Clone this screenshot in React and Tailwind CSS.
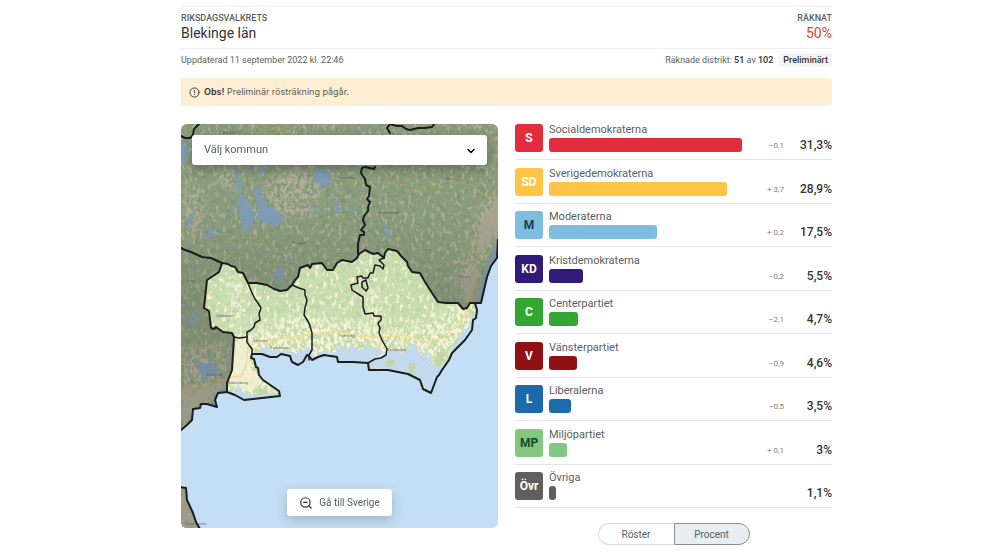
import { useState } from "react";
import { ChevronDown, CircleAlert, ZoomOut } from "lucide-react";

const parties = [
  { short: "S", name: "Socialdemokraterna", share: 31.3, label: "31,3%", change: "−0,1", color: "bg-[#e32c3e]", text: "text-white" },
  { short: "SD", name: "Sverigedemokraterna", share: 28.9, label: "28,9%", change: "+ 3,7", color: "bg-[#fdc446]", text: "text-white" },
  { short: "M", name: "Moderaterna", share: 17.5, label: "17,5%", change: "+ 0,2", color: "bg-[#7dbde0]", text: "text-[#1c3c54]" },
  { short: "KD", name: "Kristdemokraterna", share: 5.5, label: "5,5%", change: "−0,2", color: "bg-[#321a78]", text: "text-white" },
  { short: "C", name: "Centerpartiet", share: 4.7, label: "4,7%", change: "−2,1", color: "bg-[#32a532]", text: "text-white" },
  { short: "V", name: "Vänsterpartiet", share: 4.6, label: "4,6%", change: "−0,9", color: "bg-[#8f1113]", text: "text-white" },
  { short: "L", name: "Liberalerna", share: 3.5, label: "3,5%", change: "−0,5", color: "bg-[#1c69ac]", text: "text-white" },
  { short: "MP", name: "Miljöpartiet", share: 3, label: "3%", change: "+ 0,1", color: "bg-[#82c882]", text: "text-[#1d4a26]" },
  { short: "Övr", name: "Övriga", share: 1.1, label: "1,1%", change: "", color: "bg-[#5f5f5f]", text: "text-white" },
];

const maxShare = 31.3;

const municipalities = ["Karlshamn", "Karlskrona", "Olofström", "Ronneby", "Sölvesborg"];

const places = [
  { name: "Älmhult", x: 42, y: 10 },
  { name: "Tingsryd", x: 111, y: 120 },
  { name: "Lessebo", x: 158, y: 55 },
  { name: "Nybro", x: 262, y: 56 },
  { name: "Emmaboda", x: 198, y: 90 },
  { name: "Torsås", x: 278, y: 154 },
  { name: "Osby", x: 5, y: 158 },
  { name: "Olofström", x: 35, y: 193 },
  { name: "Mörrum", x: 73, y: 218 },
  { name: "Karlshamn", x: 89, y: 225 },
  { name: "Ronneby", x: 158, y: 213 },
  { name: "Karlskrona", x: 206, y: 227 },
  { name: "Bromölla", x: 26, y: 252 },
  { name: "Sölvesborg", x: 47, y: 260 },
  { name: "Simrishamn", x: 4, y: 401 },
];

// Outlines for the map, in a 317 x 404 box
const northBorder =
  "41 139 47 140 50 142 54 143 57 148 62 149 67 159 76 159 86 161 93 165 99 167 106 166 111 161 114 156 117 153 119 144 127 141 129 144 131 140 141 139 146 146 152 146 156 139 161 136 171 138 176 134 178 130 184 126 192 130 197 129 203 134 204 129 207 125 216 127 221 133 226 138 227 142 231 148 239 149 244 158 251 169 257 178 265 179 277 179 282 185 286 184 289 179 294 179";
const southCoast =
  "296 186 295 194 292 196 291 206 284 216 271 229 268 236 261 246 258 251 256 253 250 269 242 265 239 256 227 250 207 246 188 246 187 239 172 238 157 238 156 233 143 231 137 233 131 236 128 232 126 231 122 238 117 241 111 238 109 232 100 230 96 233 89 233 81 230 71 230 70 234 73 235 75 243 77 244 78 251 82 256 98 267 99 272 63 276 54 271 46 268";
const westBorder =
  "46 259 51 246 53 213 51 209 42 208 35 203 33 205 30 204 28 187 23 184 26 156 38 148";
const county = "M" + northBorder + " " + southCoast + " " + westBorder + "Z";
const mainland =
  "M0 0H317V123L316 134 312 140 306 153 303 166 300 179 294 179 L" +
  southCoast +
  " 37 269 34 276 36 283 20 280 19 284 12 285 11 296 6 301 0 306Z";
const southWest = "M-2 363 5 364 6 376 12 389 15 398 19 405-2 405Z";

// Breaks a shape up into specks with a feathered edge
function Specks({ id, frequency, seed, cut, blur }) {
  return (
    <filter id={id} colorInterpolationFilters="sRGB">
      <feTurbulence type="fractalNoise" baseFrequency={frequency} numOctaves="3" seed={seed} />
      <feColorMatrix values={"0 0 0 0 0  0 0 0 0 0  0 0 0 0 0  8 0 0 0 " + cut} result="spots" />
      <feGaussianBlur in="SourceGraphic" stdDeviation={blur} />
      <feComposite in2="spots" operator="in" />
    </filter>
  );
}

function DistrictMap() {
  return (
    <svg viewBox="0 0 317 404" className="block h-auto w-full" role="img" aria-label="Karta över Blekinge län">
      <defs>
        <clipPath id="land">
          <path d={mainland} />
          <path d={southWest} />
        </clipPath>
        <clipPath id="county">
          <path d={county} />
        </clipPath>
        <Specks id="sparse" frequency="0.26 0.17" seed="4" cut="-4.6" blur="0" />
        <Specks id="dense" frequency="0.3 0.2" seed="15" cut="-3.7" blur="4" />
        <Specks id="ponds" frequency="0.15 0.1" seed="23" cut="-5.4" blur="0" />
        <Specks id="woods" frequency="0.2" seed="31" cut="-4.2" blur="0" />
        <filter id="rough">
          <feTurbulence type="fractalNoise" baseFrequency="0.25" numOctaves="2" seed="3" />
          <feDisplacementMap in="SourceGraphic" scale="10" xChannelSelector="R" yChannelSelector="G" />
        </filter>
        <linearGradient id="shade" x1="0" y1="0" x2="0" y2="1">
          <stop offset="0" stopColor="#5c6250" stopOpacity="0" />
          <stop offset="0.3" stopColor="#5c6250" stopOpacity="0.25" />
          <stop offset="1" stopColor="#5c6250" stopOpacity="0.1" />
        </linearGradient>
      </defs>

      <rect width="317" height="404" fill="#c4dff5" />

      {/* Neighbouring counties */}
      <g clipPath="url(#land)">
        <rect width="317" height="404" fill="#8a9d7c" />
        <rect width="317" height="404" fill="#7d9170" filter="url(#woods)" opacity="0.6" />
        <rect width="317" height="404" fill="#b3b297" filter="url(#sparse)" opacity="0.8" />
        <rect width="190" height="320" fill="#8098a8" filter="url(#ponds)" opacity="0.8" />
        <g fill="#b3ad9a" filter="url(#dense)">
          <ellipse cx="112" cy="70" rx="28" ry="24" />
          <ellipse cx="47" cy="54" rx="13" ry="11" />
          <ellipse cx="12" cy="85" rx="10" ry="28" />
          <path d="M317 66 296 84 290 120 274 160 286 180 306 130 317 120Z" />
          <path d="M0 225 48 218 42 269 0 310Z" />
        </g>
        <g fill="#aaa794" opacity="0.8">
          <path d="M317 76 303 90 299 104 296 120 300 128 308 120 317 108Z" filter="url(#rough)" />
          <path d="M278 153 292 140 297 150 290 180 284 176Z" filter="url(#rough)" />
          <path d="M0 262 22 262 44 256 40 266 20 278 0 300Z" filter="url(#rough)" />
          <rect y="363" width="20" height="41" />
        </g>
        <g fill="#7f9bb5" filter="url(#rough)">
          <path d="M54 46 59 50 61 70 70 84 74 97 68 108 60 104 58 78Z" />
          <path d="M73 60 80 69 86 81 96 84 102 96 96 102 84 99 77 92Z" />
          <path d="M134 44 148 48 149 57 142 63 134 56Z" />
          <path d="M78 41 84 41 82 52 77 50Z" />
          <path d="M92 146 103 145 104 154 98 157 91 153Z" />
          <path d="M23 112 35 103 33 114 27 118Z" />
          <path d="M0 20 8 22 5 38 0 42Z" />
          <path d="M7 95 13 86 12 96 7 105Z" />
          <path d="M201 100 204 99 210 112 206 116Z" />
          <path d="M155 76 159 80 158 90 154 90Z" />
          <path d="M5 198 19 184 18 192 8 204Z" />
          <path d="M12 235 22 242 30 232 33 241 40 249 31 252 21 258 20 248Z" />
          <path d="M34 270 50 259 48 273 38 285 30 282Z" />
        </g>
        <path d="M317 118 309 134 302 150 298 164 296 181 302 181 308 156 317 136Z" fill="#8398ad" />
        <g fill="none" stroke="#b6a45f" strokeWidth="1.2" opacity="0.7">
          <path d="M154 55 198 58 242 63 268 57 290 61 305 72 317 76" />
          <path d="M317 86 301 98 297 120 293 158 289 180" />
          <path d="M0 261 20 260 52 253" />
          <path d="M70 0 84 7 97 3 118 12" />
        </g>
        <rect y="90" width="317" height="314" fill="url(#shade)" />
      </g>

      {/* Blekinge */}
      <g clipPath="url(#county)">
        <rect width="317" height="404" fill="#c8ddb0" />
        <rect y="120" width="317" height="160" fill="#bdd3a2" filter="url(#woods)" opacity="0.6" />
        <rect y="120" width="317" height="160" fill="#f2f1d2" filter="url(#sparse)" />
        <g fill="#f6f3d6" filter="url(#dense)">
          <path d="M60 208 120 190 170 196 205 206 250 197 290 172 300 204 254 240 205 234 120 236 66 234Z" />
          <path d="M50 210 67 210 74 243 100 267 65 273 46 264Z" />
          <path d="M184 165 194 165 205 205 190 208Z" />
          <path d="M50 152 60 156 62 196 50 205Z" />
        </g>
        <path d="M54 218 66 215 71 243 84 261 65 268 50 260Z" fill="#f3f1d2" opacity="0.8" filter="url(#rough)" />
        <g fill="#c3daee" filter="url(#rough)">
          <path d="M76 228 84 224 118 229 126 222 135 231 118 244 98 236 80 234Z" />
          <path d="M138 228 150 229 156 224 166 226 170 218 178 226 184 222 201 227 190 243 152 243 140 234Z" />
          <path d="M192 238 206 229 214 224 222 228 233 219 242 232 246 228 255 242 263 240 257 253 252 272 242 260 226 251 200 249Z" />
          <path d="M270 226 280 212 290 196 296 188 300 205 276 232 264 249Z" />
          <path d="M52 268 58 262 66 270 86 269 98 272 78 277 62 278Z" />
        </g>
        <g fill="#c2d7a2" filter="url(#rough)">
          <ellipse cx="209" cy="239" rx="4" ry="3" />
          <ellipse cx="231" cy="244" rx="4" ry="5" />
          <path d="M256 230 264 224 264 237 258 244 252 239Z" />
          <path d="M72 266 80 262 86 268 78 271Z" />
        </g>
        <g fill="none" stroke="#f2dc93" strokeWidth="1.4">
          <path d="M47 253 60 252 65 242 67 223 76 218 112 213 154 207 174 212 205 213 222 211 246 218 262 214 280 196 290 181" />
          <path d="M222 211 218 220 213 226" />
        </g>
      </g>

      <g fill="#5d5a6c" fontFamily="Liberation Sans, sans-serif" fontSize="4" opacity="0.9">
        {places.map((place) => (
          <text key={place.name} x={place.x} y={place.y}>
            {place.name}
          </text>
        ))}
      </g>

      {/* Borders */}
      <g fill="none" stroke="#1b1d1e" strokeWidth="2" strokeLinejoin="round" strokeLinecap="round">
        <path d={county} />
        <path d="M0 124 4 126 10 128 21 133 30 134 41 139" />
        <path d="M294 179 300 179 303 166 306 153 310 142 316 134 317 116" />
        <path d="M46 268 37 269 34 276 36 283 26 280 20 280 19 284 12 285 11 296 6 301 0 306" />
        <path d={southWest} />
        <path d="M194 43 193 45 184 43 181 44 180 49 184 55 185 61 189 63 188 72 186 75 189 78 187 83 187 87 183 92 182 96 184 101 180 106 183 108 183 111 179 111 177 120 177 130" />
        <path d="M209 9 206 4 209 0 216 2 221 2 225 5 229 6 237 4 243 4 251 3 254-1" />
        <path d="M0 12 4 14 9 14 12 11 13 5 19-1" />
        <g strokeWidth="1.5">
          <path d="M67 159 71 169 74 175 77 179 80 184 78 190 79 196 74 199 73 203 70 206 66 208 66 213 58 214 53 213" />
          <path d="M66 213 66 218 68 221 71 225 71 230" />
          <path d="M111 161 118 164 124 166 124 171 126 176 124 184 123 191 128 199 131 209 131 226 128 231 128 236" />
          <path d="M203 134 198 136 203 141 202 145 199 142 194 141 192 149 189 149 187 154 182 154 181 152 176 153 177 159 170 161 171 166 174 168 182 173 182 183 183 186 184 190 192 189 193 192 200 192 200 196 197 199 199 204 198 209 201 216 206 225 205 231 200 234 194 235 187 239" />
          <path d="M181 158 185 156 187 164 185 167 181 163Z" />
        </g>
      </g>
    </svg>
  );
}

function PartyRow({ party }) {
  return (
    <li className="flex items-end border-b border-[#e3e6e8] pb-[7px]">
      <div className={`flex size-7 shrink-0 items-center justify-center rounded-[3px] text-[12px] font-bold ${party.color} ${party.text}`}>
        {party.short}
      </div>
      <div className="ml-1.5 flex h-7 min-w-0 flex-1 flex-col justify-between">
        <span className="text-[11px] leading-3">{party.name}</span>
        <div
          className={`h-3.5 rounded-[3px] ${party.color}`}
          style={{ width: `${(party.share / maxShare) * 100}%` }}
        />
      </div>
      <span className="w-[42px] text-right text-[8px] leading-3 text-[#7c8082]">{party.change}</span>
      <span className="w-12 text-right text-[12px] leading-[14px] font-medium text-[#333]">{party.label}</span>
    </li>
  );
}

export default function App() {
  const [mode, setMode] = useState("Procent");

  return (
    <div className="min-h-screen bg-white pt-1.5 pb-3 pl-[21px] font-['Roboto',sans-serif] text-[#5a5e60]">
      <main className="mx-auto max-w-[651px]">
        <header className="flex justify-between border-y border-[#eceeef] pt-1 pb-[7px]">
          <div>
            <p className="text-[9px] leading-[14px] font-medium uppercase">Riksdagsvalkrets</p>
            <h1 className="text-[14px] leading-4 text-[#333]">Blekinge län</h1>
          </div>
          <div className="text-right">
            <p className="text-[9px] leading-[14px] font-medium uppercase">Räknat</p>
            <p className="text-[14px] leading-4 text-[#cb4a2b]">50%</p>
          </div>
        </header>

        <div className="mt-1 flex items-center justify-between text-[9px] leading-[14px]">
          <p>Uppdaterad 11 september 2022 kl. 22:46</p>
          <div className="flex items-center gap-1.5">
            <p>
              Räknade distrikt: <span className="font-medium text-[#333]">51</span> av{" "}
              <span className="font-medium text-[#333]">102</span>
            </p>
            <span className="rounded-xs bg-[#f4f5f5] px-1 font-medium text-[#333]">Preliminärt</span>
          </div>
        </div>

        <div className="mt-[11px] flex h-7 items-center gap-1 rounded-[3px] bg-[#feeed2] px-2 font-['Inter',sans-serif] text-[9px]">
          <CircleAlert className="size-[11px] text-[#333]" />
          <p>
            <strong className="font-semibold text-[#333]">Obs!</strong> Preliminär rösträkning pågår.
          </p>
        </div>

        <div className="mt-[18px] grid grid-cols-2 items-start gap-[17px]">
          <section className="relative overflow-hidden rounded-md">
            <DistrictMap />
            <div className="absolute inset-x-[11px] top-[11px]">
              <select
                aria-label="Välj kommun"
                defaultValue=""
                className="h-[30px] w-full appearance-none rounded-[3px] bg-white px-3 text-[11px] shadow-[0_4px_12px_rgba(0,0,0,0.3)]"
              >
                <option value="">Välj kommun</option>
                {municipalities.map((name) => (
                  <option key={name}>{name}</option>
                ))}
              </select>
              <ChevronDown className="pointer-events-none absolute top-2.5 right-2.5 size-3 text-black" strokeWidth={3} />
            </div>
            <div className="absolute inset-x-0 bottom-3 flex justify-center">
              <button className="flex h-[27px] items-center gap-1.5 rounded-[3px] bg-white px-3 text-[10px] shadow-[0_4px_12px_rgba(0,0,0,0.2)]">
                <ZoomOut className="size-[14px] text-[#333]" />
                Gå till Sverige
              </button>
            </div>
          </section>

          <section>
            <ul className="flex min-h-96 flex-col justify-between">
              {parties.map((party) => (
                <PartyRow key={party.short} party={party} />
              ))}
            </ul>
            <div className="mt-[15px] flex justify-center text-[10px]">
              {["Röster", "Procent"].map((name) => (
                <button
                  key={name}
                  aria-pressed={mode === name}
                  onClick={() => setMode(name)}
                  className={`h-[22px] w-[76px] border first:rounded-l-full first:border-r-0 last:rounded-r-full ${
                    mode === name ? "border-[#8a9092] bg-[#e8edef]" : "border-[#d9dcdd] bg-white"
                  }`}
                >
                  {name}
                </button>
              ))}
            </div>
          </section>
        </div>
      </main>
    </div>
  );
}
